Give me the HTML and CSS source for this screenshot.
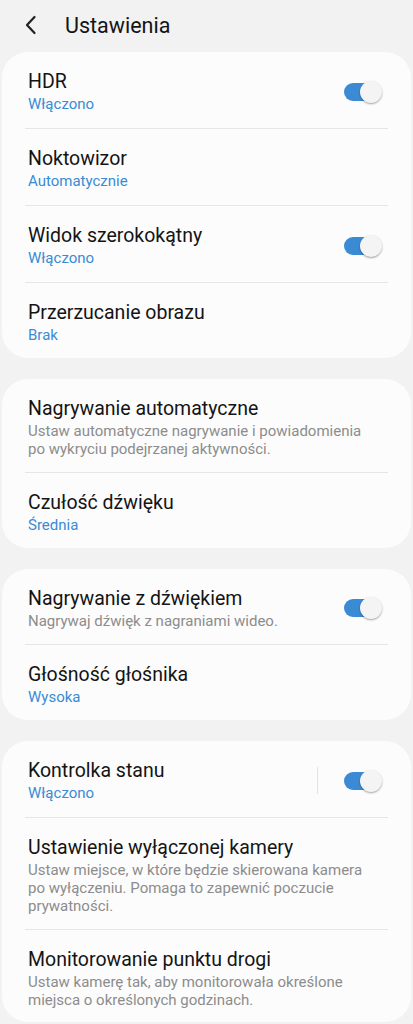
FILE: index.html
```html
<!DOCTYPE html>
<html lang="pl">
  <head>
    <meta charset="UTF-8" />
    <meta name="viewport" content="width=device-width, initial-scale=1.0" />
    <title>Ustawienia</title>
    <link rel="stylesheet" href="styles.css">
  </head>
  <body>
    <!-- header -->
    <div class="topbar">
      <svg class="back" width="14" height="20" viewBox="0 0 14 20">
        <path d="M10.5 2 L3 10 L10.5 18" fill="none" stroke="#222" stroke-width="2.2" stroke-linecap="round" stroke-linejoin="round"/>
      </svg>
      <span class="title">Ustawienia</span>
    </div>

    <!-- video -->
    <div class="card">
      <div class="row">
        <div class="text">
          <div class="name">HDR</div>
          <div class="value">Włączono</div>
        </div>
        <div class="switch on"></div>
      </div>
      <div class="row">
        <div class="text">
          <div class="name">Noktowizor</div>
          <div class="value">Automatycznie</div>
        </div>
      </div>
      <div class="row">
        <div class="text">
          <div class="name">Widok szerokokątny</div>
          <div class="value">Włączono</div>
        </div>
        <div class="switch on"></div>
      </div>
      <div class="row">
        <div class="text">
          <div class="name">Przerzucanie obrazu</div>
          <div class="value">Brak</div>
        </div>
      </div>
    </div>

    <!-- detection -->
    <div class="card">
      <div class="row">
        <div class="text">
          <div class="name">Nagrywanie automatyczne</div>
          <div class="desc">Ustaw automatyczne nagrywanie i powiadomienia po wykryciu podejrzanej aktywności.</div>
        </div>
      </div>
      <div class="row">
        <div class="text">
          <div class="name">Czułość dźwięku</div>
          <div class="value">Średnia</div>
        </div>
      </div>
    </div>

    <!-- audio -->
    <div class="card">
      <div class="row">
        <div class="text">
          <div class="name">Nagrywanie z dźwiękiem</div>
          <div class="desc">Nagrywaj dźwięk z nagraniami wideo.</div>
        </div>
        <div class="switch on"></div>
      </div>
      <div class="row">
        <div class="text">
          <div class="name">Głośność głośnika</div>
          <div class="value">Wysoka</div>
        </div>
      </div>
    </div>

    <!-- camera -->
    <div class="card">
      <div class="row">
        <div class="text">
          <div class="name">Kontrolka stanu</div>
          <div class="value">Włączono</div>
        </div>
        <div class="sep"></div>
        <div class="switch on"></div>
      </div>
      <div class="row">
        <div class="text">
          <div class="name">Ustawienie wyłączonej kamery</div>
          <div class="desc">Ustaw miejsce, w które będzie skierowana kamera po wyłączeniu. Pomaga to zapewnić poczucie prywatności.</div>
        </div>
      </div>
      <div class="row">
        <div class="text">
          <div class="name">Monitorowanie punktu drogi</div>
          <div class="desc">Ustaw kamerę tak, aby monitorowała określone miejsca o określonych godzinach.</div>
        </div>
      </div>
    </div>
  </body>
</html>
```

FILE: styles.css
```css
body {
  margin: 0;
  background: #f2f2f2;
  font-family: Roboto, "Noto Sans", sans-serif;
  color: #141414;
}
.topbar {
  display: flex;
  align-items: center;
  height: 52px;
  padding-left: 24px;
}
.topbar .back {
  margin-right: 27px;
  margin-top: -2px;
}
.topbar .title {
  font-size: 21.5px;
  margin-top: -1px;
}
.card {
  background: #fcfcfc;
  margin: 0 2px 21px;
  border-radius: 26px;
  padding: 0 23px;
}
.row {
  display: flex;
  align-items: center;
  padding: 17px 0 14px;
  border-top: 1px solid #e6e6e6;
}
.row:first-child {
  border-top: none;
}
.row:last-child {
  padding-bottom: 13px;
}
.text {
  flex: 1;
  padding-left: 3px;
  padding-right: 20px;
}
.name {
  font-size: 19.5px;
  line-height: 25px;
}
.value {
  font-size: 15px;
  line-height: 20px;
  color: #3a8bd4;
}
.desc {
  font-size: 15px;
  line-height: 18px;
  color: #8c8c8c;
  padding-top: 1px;
}
.sep {
  width: 1px;
  height: 27px;
  background: #e4e4e4;
  margin-right: 26px;
}
.switch {
  position: relative;
  width: 36px;
  height: 18px;
  border-radius: 9px;
  background: #3a8bd4;
  margin-right: 8px;
}
.switch::after {
  content: "";
  position: absolute;
  right: -2px;
  top: -2px;
  width: 22px;
  height: 22px;
  border-radius: 50%;
  background: #f4f4f4;
  box-shadow: 0 1px 2px rgba(0, 0, 0, 0.35);
}
```
